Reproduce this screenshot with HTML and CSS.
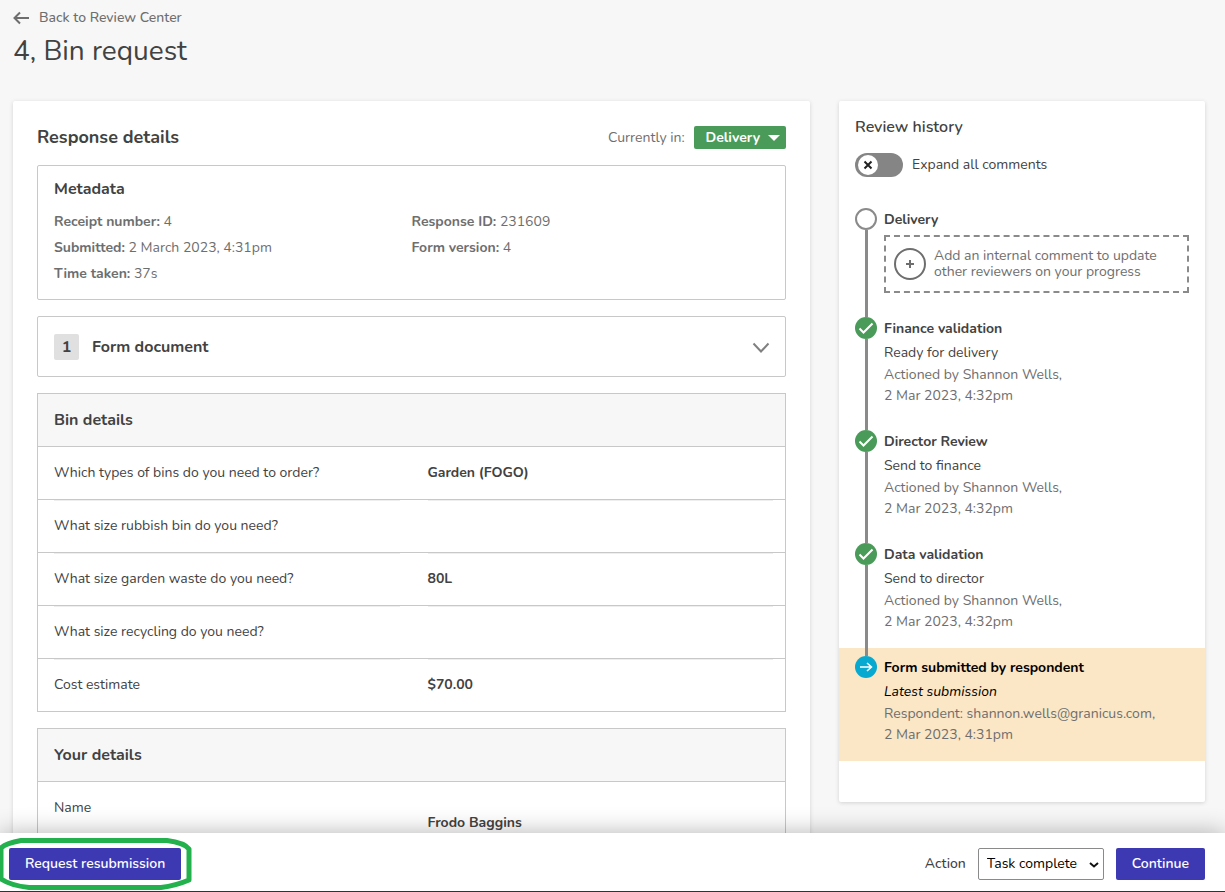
FILE: index.html
```html
<!DOCTYPE html>
<html lang="en">
  <head>
    <meta charset="UTF-8" />
    <meta name="viewport" content="width=device-width, initial-scale=1.0" />
    <title>4, Bin request</title>
    <link rel="stylesheet" href="styles.css">
  </head>
  <body>
    <main class="page">
      <header class="page-header">
        <a href="#" class="back-link">
          <svg width="17" height="14" viewBox="0 0 17 14" fill="none" stroke="currentColor" stroke-width="2">
            <path d="M16 7H2M7 1.5L1.5 7L7 12.5" />
          </svg>
          Back to Review Center
        </a>
        <h1>4, Bin request</h1>
      </header>

      <div class="columns">
        <section class="card response">
          <div class="response-header">
            <h2>Response details</h2>
            <div class="stage">
              <span>Currently in:</span>
              <button type="button" class="stage-button">
                Delivery
                <svg width="12" height="6" viewBox="0 0 12 6" fill="currentColor"><path d="M0 0h12L6 6z" /></svg>
              </button>
            </div>
          </div>

          <div class="box metadata">
            <h3>Metadata</h3>
            <div class="metadata-grid">
              <p><b>Receipt number:</b> 4</p>
              <p><b>Response ID:</b> 231609</p>
              <p><b>Submitted:</b> 2 March 2023, 4:31pm</p>
              <p><b>Form version:</b> 4</p>
              <p><b>Time taken:</b> 37s</p>
            </div>
          </div>

          <button type="button" class="box document">
            <span class="document-count">1</span>
            <span class="document-title">Form document</span>
            <svg width="18" height="12" viewBox="0 0 18 12" fill="none" stroke="currentColor" stroke-width="2">
              <path d="M1.5 2.5L9 10.5L16.5 2.5" />
            </svg>
          </button>

          <div class="box">
            <h3 class="box-title" id="bin-details">Bin details</h3>
            <table class="answers" aria-labelledby="bin-details">
              <tr>
                <th scope="row">Which types of bins do you need to order?</th>
                <td>Garden (FOGO)</td>
              </tr>
              <tr>
                <th scope="row">What size rubbish bin do you need?</th>
                <td></td>
              </tr>
              <tr>
                <th scope="row">What size garden waste do you need?</th>
                <td>80L</td>
              </tr>
              <tr>
                <th scope="row">What size recycling do you need?</th>
                <td></td>
              </tr>
              <tr>
                <th scope="row">Cost estimate</th>
                <td>$70.00</td>
              </tr>
            </table>
          </div>

          <div class="box">
            <h3 class="box-title" id="your-details">Your details</h3>
            <table class="answers" aria-labelledby="your-details">
              <tr class="answer-group">
                <th scope="row">Name</th>
                <td>Frodo Baggins</td>
              </tr>
            </table>
          </div>
        </section>

        <aside class="card history">
          <div class="history-header">
            <h2>Review history</h2>
            <label class="switch">
              <input type="checkbox" />
              <svg class="switch-knob" width="20" height="20" viewBox="0 0 20 20">
                <circle cx="10" cy="10" r="10" fill="#fff" />
                <path d="M6.5 6.5l7 7M13.5 6.5l-7 7" stroke="#222" stroke-width="2" />
              </svg>
              Expand all comments
            </label>
          </div>

          <ol class="timeline">
            <li class="step">
              <div class="step-marker">
                <svg width="22" height="22" viewBox="0 0 22 22">
                  <circle cx="11" cy="11" r="10" fill="#fff" stroke="#8a8a8a" stroke-width="2" />
                </svg>
              </div>
              <div class="step-body">
                <h3>Delivery</h3>
                <button type="button" class="add-comment">
                  <svg width="32" height="32" viewBox="0 0 32 32" fill="none" stroke="#6e6e6e" stroke-width="2">
                    <circle cx="16" cy="16" r="15" />
                    <path d="M16 12v8M12 16h8" />
                  </svg>
                  <span>Add an internal comment to update other reviewers on your progress</span>
                </button>
              </div>
            </li>
            <li class="step">
              <div class="step-marker">
                <svg width="22" height="22" viewBox="0 0 22 22">
                  <circle cx="11" cy="11" r="11" fill="#4a9b59" />
                  <path d="M4.5 11.5l4 4L17.5 6.5" fill="none" stroke="#fff" stroke-width="2" />
                </svg>
              </div>
              <div class="step-body">
                <h3>Finance validation</h3>
                <p class="step-action">Ready for delivery</p>
                <p class="step-meta">Actioned by Shannon Wells,<br />2 Mar 2023, 4:32pm</p>
              </div>
            </li>
            <li class="step">
              <div class="step-marker">
                <svg width="22" height="22" viewBox="0 0 22 22">
                  <circle cx="11" cy="11" r="11" fill="#4a9b59" />
                  <path d="M4.5 11.5l4 4L17.5 6.5" fill="none" stroke="#fff" stroke-width="2" />
                </svg>
              </div>
              <div class="step-body">
                <h3>Director Review</h3>
                <p class="step-action">Send to finance</p>
                <p class="step-meta">Actioned by Shannon Wells,<br />2 Mar 2023, 4:32pm</p>
              </div>
            </li>
            <li class="step">
              <div class="step-marker">
                <svg width="22" height="22" viewBox="0 0 22 22">
                  <circle cx="11" cy="11" r="11" fill="#4a9b59" />
                  <path d="M4.5 11.5l4 4L17.5 6.5" fill="none" stroke="#fff" stroke-width="2" />
                </svg>
              </div>
              <div class="step-body">
                <h3>Data validation</h3>
                <p class="step-action">Send to director</p>
                <p class="step-meta">Actioned by Shannon Wells,<br />2 Mar 2023, 4:32pm</p>
              </div>
            </li>
            <li class="step step-current">
              <div class="step-marker">
                <svg width="22" height="22" viewBox="0 0 22 22">
                  <circle cx="11" cy="11" r="11" fill="#08a9d0" />
                  <path d="M5 11h11M12 7l4.5 4L12 15" fill="none" stroke="#fff" stroke-width="1.5" />
                </svg>
              </div>
              <div class="step-body">
                <h3>Form submitted by respondent</h3>
                <p class="step-action">Latest submission</p>
                <p class="step-meta">Respondent: shannon.wells@granicus.com,<br />2 Mar 2023, 4:31pm</p>
              </div>
            </li>
          </ol>
        </aside>
      </div>
    </main>

    <footer class="action-bar">
      <div class="resubmit">
        <button type="button" class="btn">Request resubmission</button>
        <svg class="resubmit-ring" width="196" height="56" viewBox="0 0 196 56" fill="none" stroke="#22b14c" stroke-width="5">
          <path d="M22 4.5H168C180 6 187 9 190 13V44C183 47 174 50 162 51.5H30C16 50 8 47 2 43V12C6 8 14 6 22 4.5Z" stroke-linejoin="round" />
        </svg>
      </div>
      <form class="action-form">
        <label for="action">Action</label>
        <div class="select">
          <select id="action">
            <option>Task complete</option>
          </select>
          <svg width="10" height="6" viewBox="0 0 10 6" fill="none" stroke="#111" stroke-width="2">
            <path d="M1 1L5 4.5L9 1" />
          </svg>
        </div>
        <button type="button" class="btn">Continue</button>
      </form>
    </footer>
  </body>
</html>
```
FILE: styles.css
```css
:root {
  --primary-color: #3d39b2;
  --success-color: #4a9b59;
  --text-color: #424242;
  --text-light: #6e6e6e;
  --background-color: #f7f7f7;
  --border-color: #c8c8c8;
  --line-color: #8a8a8a;
}

* {
  margin: 0;
  padding: 0;
  box-sizing: border-box;
}

body {
  font-family: Nunito, Lato, sans-serif;
  font-size: 14px;
  line-height: 20px;
  color: var(--text-color);
  background-color: var(--background-color);
  display: flex;
  flex-direction: column;
  height: 100vh;
}

button,
input,
select {
  font: inherit;
  color: inherit;
}

button {
  cursor: pointer;
}

svg {
  display: block;
  flex: none;
}

.page {
  flex: 1;
  min-height: 0;
  overflow-y: auto;
  scrollbar-width: none;
  padding: 8px 20px 24px 13px;
}

.page-header {
  margin-bottom: 32px;
}

.back-link {
  display: flex;
  align-items: center;
  gap: 9px;
  color: var(--text-light);
  font-weight: 500;
  text-decoration: none;
}

.page-header h1 {
  font-size: 28px;
  font-weight: 400;
  line-height: 36px;
  margin-top: 5px;
}

.columns {
  display: grid;
  grid-template-columns: 1fr 366px;
  align-items: start;
  gap: 29px;
}

.card {
  background-color: white;
  border-radius: 2px;
  box-shadow: 0 1px 4px rgba(0, 0, 0, 0.15);
}

/* Response details */
.response {
  display: flex;
  flex-direction: column;
  gap: 16px;
  padding: 25px 24px;
}

.response-header {
  display: flex;
  justify-content: space-between;
  align-items: center;
}

.response-header h2 {
  font-size: 18px;
  line-height: 23px;
}

.stage {
  display: flex;
  align-items: center;
  gap: 9px;
  color: var(--text-light);
}

.stage-button {
  display: flex;
  align-items: center;
  gap: 8px;
  height: 23px;
  padding: 0 6px 0 12px;
  border: 0;
  border-radius: 2px;
  background-color: var(--success-color);
  color: white;
  font-weight: 700;
}

.box {
  border: 1px solid var(--border-color);
}

.box h3 {
  font-size: 16px;
}

.metadata {
  padding: 13px 16px 12px;
  border-radius: 2px;
}

.metadata-grid {
  display: grid;
  grid-template-columns: 1fr 1fr;
  margin-top: 10px;
  line-height: 26px;
  color: var(--text-light);
}

.document {
  display: flex;
  align-items: center;
  padding: 17px 15px 16px 16px;
  border-radius: 2px;
  background: none;
  text-align: left;
}

.document-count {
  width: 25px;
  border-radius: 2px;
  background-color: #e0e0e0;
  font-size: 16px;
  font-weight: 700;
  line-height: 26px;
  text-align: center;
}

.document-title {
  flex: 1;
  margin-left: 13px;
  font-size: 16px;
  font-weight: 700;
}

.document svg {
  color: #808080;
}

.box-title {
  padding: 16px;
  background-color: var(--background-color);
}

.answers {
  width: 100%;
  border-spacing: 0;
  table-layout: fixed;
}

.answers th,
.answers td {
  height: 53px;
  padding: 16px;
  border-top: 1px solid var(--border-color);
  text-align: left;
  vertical-align: top;
}

.answers tr + tr th,
.answers tr + tr td {
  background: linear-gradient(#eee, #eee) 16px 0 / calc(100% - 28px) 1px no-repeat;
}

.answers th {
  font-weight: 400;
}

.answers td {
  font-weight: 700;
}

.answers .answer-group td {
  padding-top: 31px;
}

/* Review history */
.history {
  padding-bottom: 41px;
}

.history-header {
  padding: 16px 16px 23px;
}

.history-header h2 {
  font-size: 16px;
  font-weight: 600;
}

.switch {
  position: relative;
  display: flex;
  align-items: center;
  gap: 9px;
  margin-top: 16px;
  cursor: pointer;
}

.switch input {
  appearance: none;
  width: 48px;
  height: 24px;
  border-radius: 12px;
  background-color: #858585;
}

.switch-knob {
  position: absolute;
  left: 3px;
  top: 2px;
}

.switch input:checked + .switch-knob {
  left: 25px;
}

.timeline {
  list-style: none;
}

.step {
  display: flex;
  gap: 7px;
  padding: 0 16px;
}

.step-marker {
  display: flex;
  flex-direction: column;
  align-items: center;
}

.step-marker::before,
.step-marker::after {
  content: "";
  width: 3px;
  background-color: var(--line-color);
}

.step-marker::before {
  height: 8px;
}

.step-marker::after {
  flex: 1;
}

.step:first-child .step-marker::before,
.step:last-child .step-marker::after {
  background: none;
}

.step-body {
  flex: 1;
  padding: 10px 0 16px;
}

.step-body h3 {
  font-size: 14px;
}

.step-action {
  margin: 4px 0 1px;
}

.step-meta {
  line-height: 21px;
  color: var(--text-light);
}

.add-comment {
  display: flex;
  align-items: center;
  gap: 8px;
  width: 100%;
  margin-top: 5px;
  padding: 11px 8px;
  border: 2px dashed var(--line-color);
  background: none;
  color: var(--text-light);
  line-height: 16px;
  text-align: left;
}

.step-current {
  background-color: #fbe6c6;
  color: black;
}

.step-current .step-action {
  font-style: italic;
}

/* Bottom bar */
.action-bar {
  position: relative;
  display: flex;
  justify-content: space-between;
  align-items: center;
  padding: 15px 20px 11px 9px;
  border-bottom: 1px solid #333;
  background-color: white;
  box-shadow: 0 0 24px rgba(0, 0, 0, 0.3);
}

.btn {
  height: 32px;
  padding: 0 16px;
  border: 0;
  border-radius: 2px;
  background-color: var(--primary-color);
  color: white;
  font-weight: 600;
}

.resubmit {
  position: relative;
}

.resubmit-ring {
  position: absolute;
  left: -10px;
  top: -12px;
  pointer-events: none;
}

.action-form {
  display: flex;
  align-items: center;
  gap: 12px;
}

.action-form label {
  font-weight: 500;
}

.select {
  position: relative;
}

.select select {
  appearance: none;
  width: 126px;
  height: 32px;
  padding: 0 8px;
  border: 1px solid #8a8a8a;
  border-radius: 2px;
  background-color: white;
  color: black;
}

.select svg {
  position: absolute;
  right: 5px;
  top: 14px;
  pointer-events: none;
}
```
